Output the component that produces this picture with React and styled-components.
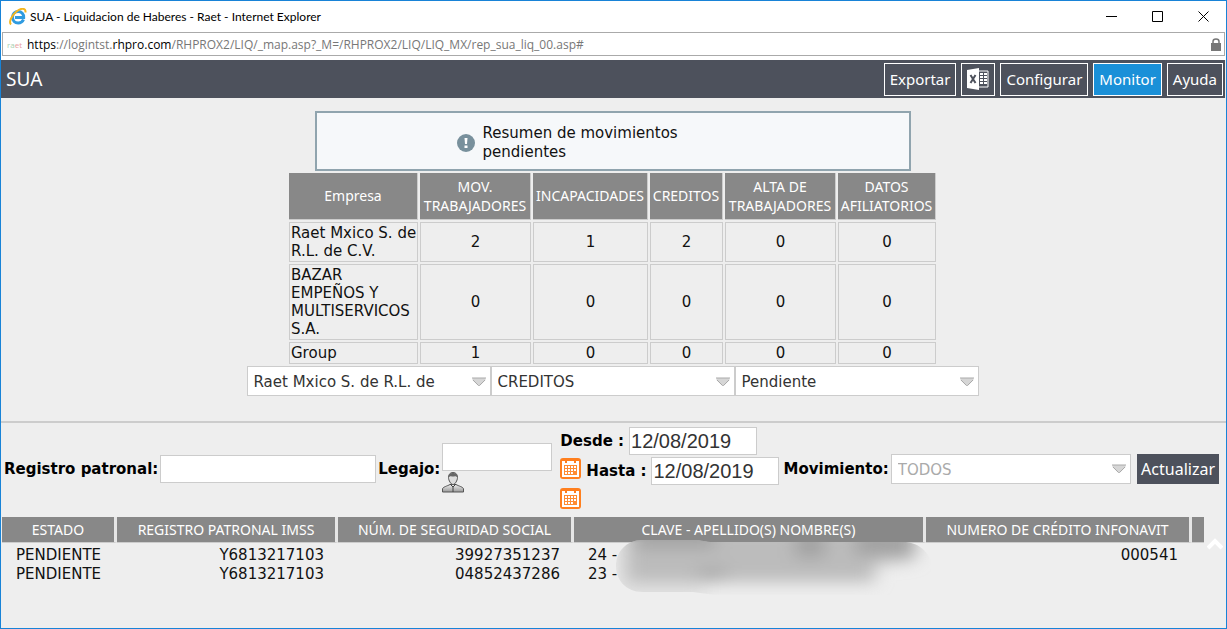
import React, {useState} from "react";
import styled, {createGlobalStyle} from "styled-components";

const companies = [
    {name: 'Raet Mxico S. de R.L. de C.V.', values: [2, 1, 2, 0, 0]},
    {name: 'BAZAR EMPEÑOS Y MULTISERVICOS S.A.', values: [0, 0, 0, 0, 0]},
    {name: 'Group', values: [1, 0, 0, 0, 0]},
];

const summaryColumns = [
    {title: 'Empresa', width: 129},
    {title: 'MOV. TRABAJADORES', width: 111},
    {title: 'INCAPACIDADES', width: 115},
    {title: 'CREDITOS', width: 73},
    {title: 'ALTA DE TRABAJADORES', width: 111},
    {title: 'DATOS AFILIATORIOS', width: 98},
];

const records = [
    {estado: 'PENDIENTE', registro: 'Y6813217103', nss: '39927351237', clave: '24 -', credito: '000541'},
    {estado: 'PENDIENTE', registro: 'Y6813217103', nss: '04852437286', clave: '23 -', credito: ''},
];

const recordColumns = [
    {title: 'ESTADO', width: 115},
    {title: 'REGISTRO PATRONAL IMSS', width: 221},
    {title: 'NÚM. DE SEGURIDAD SOCIAL', width: 236},
    {title: 'CLAVE - APELLIDO(S) NOMBRE(S)', width: 352},
    {title: 'NUMERO DE CRÉDITO INFONAVIT', width: 266},
    {title: '', width: 12},
];

function Dropdown({id, label, options, disabled}) {
    return (
        <SelectBox>
            <select id={id} aria-label={label} disabled={disabled}>
                {options.map((option) => <option key={option}>{option}</option>)}
            </select>
            <svg width="14" height="9" viewBox="0 0 14 9">
                <path d="M.5 1h13v2L8 8.500H6L.5 3z" fill="#d6d6d6"/>
                <path d="M0 1h14M1 3l5.500 5.500h1L13 3" fill="none" stroke="#aaa"/>
            </svg>
        </SelectBox>
    );
}

function CalendarIcon() {
    return (
        <svg width="21" height="21" viewBox="0 0 21 21">
            <rect width="21" height="21" rx="3" fill="#ff7f1e"/>
            <path d="M2 3h3v2h2V3h7v2h2V3h3v16H2z" fill="#fff"/>
            <path d="M5 0h2v5H5zM14 0h2v5h-2z" fill="#ff7f1e"/>
            <path d="M4 7h13v10H4z" fill="#ff8c33"/>
            <path d="M5 8h2v2H5zM8 8h2v2H8zM11 8h2v2h-2zM14 8h2v2h-2zM5 11h2v2H5zM8 11h2v2H8zM11 11h2v2h-2zM14 11h2v2h-2zM5 14h2v2H5zM8 14h2v2H8zM11 14h2v2h-2z" fill="#fff"/>
        </svg>
    );
}

function PersonIcon() {
    return (
        <svg width="22" height="21" viewBox="0 0 22 21">
            <defs>
                <linearGradient id="suit" x1="0" y1="0" x2="0" y2="1">
                    <stop offset="0" stopColor="#eee"/>
                    <stop offset="1" stopColor="#999"/>
                </linearGradient>
            </defs>
            <path d="M.5 20v-3c0-2 5-3 7.500-4.500h6c2.500 1.500 7.500 2.500 7.500 4.500v3z" fill="url(#suit)" stroke="#555"/>
            <path d="M11 .5c3 0 4.500 2 4.500 5S13 12.500 11 12.500 6.500 8.500 6.500 5.500 8 .5 11 .5z" fill="#ddd" stroke="#555"/>
            <path d="M6.500 5.500C6.500 2 8.500 1 11 1s4.500 1 4.500 4.500C14 3.500 12 4.500 11 4.500S8 3.500 6.500 5.500z" fill="#666"/>
            <path d="M8 12l3 3 3-3M11 14v6" fill="none" stroke="#444"/>
        </svg>
    );
}

export default function App() {
    const [desde, setDesde] = useState('12/08/2019');
    const [hasta, setHasta] = useState('12/08/2019');

    return (
        <Window>
            <GlobalStyle/>
            <TitleBar>
                <svg width="18" height="18" viewBox="0 0 18 18">
                    <path d="M14.500 11.500c-1 2.300-3 3.500-5.300 3.500C6 15 3.500 12.600 3.500 9.300S6 3.500 9.200 3.500s5.800 2.500 5.500 6H6" fill="none" stroke="#2f9be0" strokeWidth="3"/>
                    <path d="M2 16.500C-.5 14 2.500 7.500 7.500 3.500S17 0 16.500 4.500" fill="none" stroke="#f3b61f" strokeWidth="2"/>
                </svg>
                <h1>SUA - Liquidacion de Haberes - Raet - Internet Explorer</h1>
                <WindowButton aria-label="Minimizar">
                    <svg width="11" height="11"><path d="M0 5.500h11" stroke="#000"/></svg>
                </WindowButton>
                <WindowButton aria-label="Maximizar">
                    <svg width="11" height="11"><path d="M.5.5h10v10H.5z" fill="none" stroke="#000"/></svg>
                </WindowButton>
                <WindowButton aria-label="Cerrar">
                    <svg width="11" height="11"><path d="M.5.5l10 10M10.500.5l-10 10" stroke="#000"/></svg>
                </WindowButton>
            </TitleBar>
            <AddressBar>
                <Address>
                    <Favicon><i>ra</i>et</Favicon>
                    <Url><b>https</b>://logintst.<b>rhpro.com</b>/RHPROX2/LIQ/_map.asp?_M=/RHPROX2/LIQ/LIQ_MX/rep_sua_liq_00.asp#</Url>
                    <svg width="10" height="13" viewBox="0 0 10 13">
                        <path d="M2 6V3.500C2 1.500 3 1 5 1s3 .5 3 2.500V6" fill="none" stroke="#777" strokeWidth="1.500"/>
                        <path d="M0 5h10v8H0z" fill="#777"/>
                    </svg>
                </Address>
            </AddressBar>

            <Toolbar>
                <h2>SUA</h2>
                <ToolButton>Exportar</ToolButton>
                <ToolButton aria-label="Excel">
                    <svg width="22" height="22" viewBox="0 0 22 22">
                        <path d="M0 2l12-2v22L0 20z" fill="#fff"/>
                        <path d="M3.500 7l5 8M8.500 7l-5 8" stroke="#4d515c" strokeWidth="2"/>
                        <path d="M12 3h9v16h-9" fill="none" stroke="#fff"/>
                        <path d="M13 6h3M17 6h3M13 9h3M17 9h3M13 12h3M17 12h3M13 15h3M17 15h3" stroke="#fff" strokeWidth="2"/>
                    </svg>
                </ToolButton>
                <ToolButton>Configurar</ToolButton>
                <ToolButton $active>Monitor</ToolButton>
                <ToolButton>Ayuda</ToolButton>
            </Toolbar>

            <Summary>
                <Notice>
                    <svg width="18" height="18" viewBox="0 0 18 18">
                        <circle cx="9" cy="9" r="9" fill="#78909c"/>
                        <path d="M7.500 4h3l-.5 6H8zM7.500 11.500h3V14h-3z" fill="#fff"/>
                    </svg>
                    <p>Resumen de movimientos pendientes</p>
                </Notice>
                <SummaryTable>
                    <colgroup>
                        {summaryColumns.map((column) => <Col key={column.title} $width={column.width}/>)}
                    </colgroup>
                    <thead>
                        <tr>
                            {summaryColumns.map((column) => <th key={column.title}>{column.title}</th>)}
                        </tr>
                    </thead>
                    <tbody>
                        {companies.map((company) => (
                            <tr key={company.name}>
                                <td>{company.name}</td>
                                {company.values.map((value, index) => <td key={index}>{value}</td>)}
                            </tr>
                        ))}
                    </tbody>
                </SummaryTable>
                <Selectors>
                    <Dropdown label="Empresa" options={['Raet Mxico S. de R.L. de']}/>
                    <Dropdown label="Tipo" options={['CREDITOS']}/>
                    <Dropdown label="Estado" options={['Pendiente']}/>
                </Selectors>
            </Summary>

            <Filters>
                <Label htmlFor="registro">Registro patronal:</Label>
                <TextInput id="registro" $width={216}/>
                <Label htmlFor="legajo">Legajo:</Label>
                <Lookup>
                    <TextInput id="legajo" $width={110}/>
                    <IconButton type="button" aria-label="Buscar legajo"><PersonIcon/></IconButton>
                </Lookup>
                <Dates>
                    <DateLine>
                        <Label htmlFor="desde">Desde :</Label>
                        <TextInput id="desde" $width={128} value={desde} onChange={(e) => setDesde(e.target.value)}/>
                    </DateLine>
                    <DateLine>
                        <IconButton type="button" aria-label="Calendario desde"><CalendarIcon/></IconButton>
                        <Label htmlFor="hasta">Hasta :</Label>
                        <TextInput id="hasta" $width={128} value={hasta} onChange={(e) => setHasta(e.target.value)}/>
                    </DateLine>
                    <IconButton type="button" aria-label="Calendario hasta"><CalendarIcon/></IconButton>
                </Dates>
                <Label htmlFor="movimiento">Movimiento:</Label>
                <Dropdown id="movimiento" options={['TODOS']} disabled/>
                <UpdateButton type="button">Actualizar</UpdateButton>
            </Filters>

            <Results>
                <RecordTable>
                    <colgroup>
                        {recordColumns.map((column) => <Col key={column.title} $width={column.width}/>)}
                    </colgroup>
                    <thead>
                        <tr>
                            {recordColumns.map((column) => <th key={column.title}>{column.title}</th>)}
                        </tr>
                    </thead>
                    <tbody>
                        {records.map((record) => (
                            <tr key={record.nss}>
                                <RecordCell>{record.estado}</RecordCell>
                                <RecordCell $right>{record.registro}</RecordCell>
                                <RecordCell $right>{record.nss}</RecordCell>
                                <RecordCell>{record.clave}</RecordCell>
                                <RecordCell $right>{record.credito}</RecordCell>
                                <td/>
                            </tr>
                        ))}
                    </tbody>
                </RecordTable>
                <Redaction viewBox="0 0 320 60">
                    <defs>
                        <filter id="smear" x="-20%" y="-80%" width="140%" height="260%">
                            <feGaussianBlur stdDeviation="9 8"/>
                        </filter>
                        <clipPath id="pill">
                            <path d="M28 0h50c10 0 12 2 20 2h190c16 0 24 10 28 18v35H100L78 52H28C-8 52-8 0 28 0z"/>
                        </clipPath>
                    </defs>
                    <g clipPath="url(#pill)">
                        <path d="M0 0h90v60H0z" fill="#e0e0e0" filter="url(#smear)"/>
                        <g filter="url(#smear)">
                            <path d="M12-12h288v32l-40 4v18H12z" fill="#bcbcbc"/>
                            <path d="M20-12h80v20H20zM180-12h30v30h-30zM240-12h60v28h-60z" fill="#a2a2a2"/>
                            <path d="M84 28h26v12H84z" fill="#a8a8a8"/>
                        </g>
                    </g>
                </Redaction>
                <ScrollTop href="#" aria-label="Subir">
                    <svg width="16" height="12" viewBox="0 0 16 12">
                        <path d="M1 10l7-7 7 7" fill="none" stroke="#fff" strokeWidth="4"/>
                    </svg>
                </ScrollTop>
            </Results>
        </Window>
    );
}

const GlobalStyle = createGlobalStyle`
    * {
        box-sizing: border-box;
    }

    body {
        margin: 0;
        font: 15px/18px "DejaVu Sans", Verdana, sans-serif;
        color: #111;
    }

    h1, h2, p {
        margin: 0;
        font-weight: normal;
    }

    svg {
        display: block;
        flex: none;
    }

    button {
        cursor: pointer;
    }
`;

const Window = styled.div`
    min-height: 100vh;
    border: 1px solid #1883d7;
    background: #eee;
`;

const TitleBar = styled.header`
    display: flex;
    align-items: center;
    height: 31px;
    padding-left: 8px;
    background: #fff;

    h1 {
        flex: 1;
        margin-left: 3px;
        color: #000;
        font: 12px/16px Lato, sans-serif;
    }
`;

const WindowButton = styled.button`
    display: flex;
    align-items: center;
    justify-content: center;
    width: 46px;
    height: 28px;
    padding: 0;
    border: 0;
    background: none;
`;

const AddressBar = styled.div`
    padding: 0 1px 4px;
    background: #fff;
`;

const Address = styled.div`
    display: flex;
    align-items: center;
    height: 24px;
    padding: 1px 3px 0 4px;
    border: 1px solid #aaa;
    font: 12px/16px "Open Sans", sans-serif;
    color: #777;
`;

const Favicon = styled.span`
    width: 20px;
    font-size: 8px;
    color: #e8a0a0;

    i {
        font-style: normal;
        color: #a9d0b0;
    }
`;

const Url = styled.span`
    flex: 1;

    b {
        font-weight: normal;
        color: #000;
    }
`;

const Toolbar = styled.nav`
    display: flex;
    align-items: center;
    gap: 5px;
    height: 38px;
    margin-right: 1px;
    padding: 0 2px 0 5px;
    background: #4d515c;
    color: #fff;

    h2 {
        flex: 1;
        font: 19px/24px "Noto Sans", sans-serif;
    }
`;

const ToolButton = styled.button`
    height: 33px;
    padding: 0 5px;
    border: 1px solid #fff;
    background: ${({$active}) => $active ? '#1a90d8' : '#4d515c'};
    color: #fff;
    font: 15px/20px "Noto Sans", sans-serif;
`;

const Summary = styled.section`
    display: flex;
    flex-direction: column;
    align-items: center;
    padding: 13px 2px 25px 0;
    border-bottom: 2px solid #ccc;
`;

const Notice = styled.div`
    display: flex;
    align-items: center;
    justify-content: center;
    gap: 8px;
    width: 596px;
    max-width: 100%;
    height: 60px;
    padding-top: 4px;
    border: 2px solid #90a4ae;
    background: #f6f8fa;
    line-height: 19px;

    p {
        width: 286px;
        padding-right: 80px;
    }
`;

const Col = styled.col`
    width: ${({$width}) => $width}px;
`;

const SummaryTable = styled.table`
    border-spacing: 2px;
    table-layout: fixed;
    width: 651px;

    th {
        height: 47px;
        padding: 0 0 1px;
        border-right: 1px solid #ccc;
        border-bottom: 1px solid #ccc;
        background: #888;
        color: #fff;
        font: 14px/19px "Noto Sans", sans-serif;
    }

    td {
        padding: 1px;
        border: 1px solid #ccc;
        text-align: center;
    }

    td:first-child {
        padding-right: 0;
        text-align: left;
    }
`;

const Selectors = styled.div`
    display: flex;
    width: 732px;
    max-width: 100%;
`;

const SelectBox = styled.div`
    display: grid;
    flex: 1;
    align-items: center;

    select, svg {
        grid-area: 1 / 1;
    }

    svg {
        justify-self: end;
        margin-right: 5px;
        pointer-events: none;
    }

    select {
        appearance: none;
        width: 100%;
        height: 30px;
        padding: 2px 24px 0 6px;
        border: 1px solid #ccc;
        border-radius: 0;
        background: #fff;
        color: #333;
        font: 15px/20px "DejaVu Sans", Verdana, sans-serif;
    }

    select:disabled {
        color: #aaa;
        opacity: 1;
    }
`;

const Filters = styled.form`
    display: flex;
    align-items: center;
    gap: 2px;
    padding: 4px 7px 7px 3px;
`;

const Label = styled.label`
    color: #000;
    font-size: 15px;
    font-weight: bold;
    white-space: nowrap;
`;

const TextInput = styled.input`
    width: ${({$width}) => $width}px;
    height: 28px;
    padding: 0 1px;
    border: 1px solid #ccc;
    background: #fff;
    color: #333;
    font: 20px/24px "Liberation Sans", Arial, sans-serif;
`;

const Lookup = styled.div`
    display: flex;
    flex-direction: column;
    margin-right: 6px;
`;

const IconButton = styled.button`
    align-self: flex-start;
    padding: 1px 0;
    border: 0;
    background: none;
`;

const Dates = styled.div`
    display: flex;
    flex-direction: column;
    gap: 2px;
    margin-right: 2px;
`;

const DateLine = styled.div`
    display: flex;
    align-items: center;
    gap: 5px;
`;

const UpdateButton = styled.button`
    height: 30px;
    margin-left: 4px;
    padding: 0 4px;
    border: 0;
    background: #4d515c;
    color: #fff;
    font: 16px/20px "Noto Sans", sans-serif;
`;

const Results = styled.section`
    position: relative;
    padding: 0 22px 0 1px;
`;

const RecordTable = styled.table`
    width: 100%;
    border-spacing: 0;
    table-layout: fixed;

    th {
        height: 26px;
        padding: 0;
        border-right: 3px solid #e6e6e6;
        border-bottom: 1px solid #ccc;
        background: #888;
        color: #fff;
        font: 14px/19px "Noto Sans", sans-serif;
    }

    th:last-child {
        border-right: 0;
    }
`;

const RecordCell = styled.td`
    height: 19px;
    padding: 0 14px;
    text-align: ${({$right}) => $right ? 'right' : 'left'};

    tr:first-child & {
        height: 21px;
        padding-top: 2px;
    }
`;

const Redaction = styled.svg`
    position: absolute;
    top: 23px;
    left: 614px;
    width: 320px;
    height: 60px;
`;

const ScrollTop = styled.a`
    position: absolute;
    top: 21px;
    right: 3px;
`;
